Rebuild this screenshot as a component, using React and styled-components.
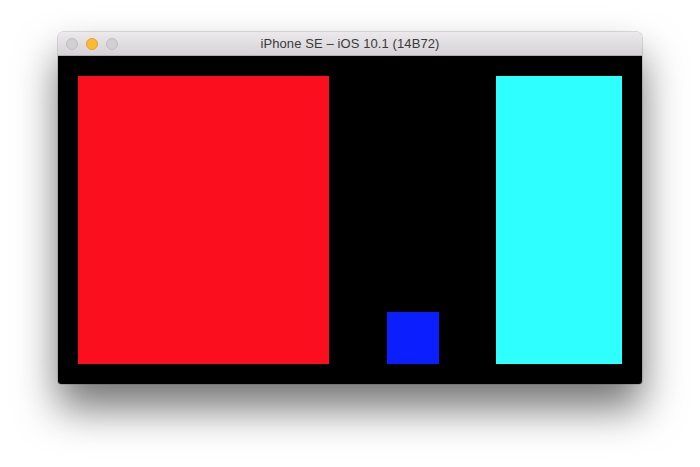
import React from 'react';
import styled, { createGlobalStyle } from 'styled-components';

const GlobalStyle = createGlobalStyle`
  html, body {
    margin: 0;
    padding: 0;
    background: #ffffff;
  }
  body {
    font-family: 'Liberation Sans', 'Helvetica Neue', Arial, sans-serif;
  }
`;

const Stage = styled.div`
  width: 700px;
  height: 467px;
  padding: 32px 0 0 58px;
  box-sizing: border-box;
  overflow: hidden;
`;

const Window = styled.div`
  width: 584px;
  border-radius: 5px 5px 3px 3px;
  overflow: hidden;
  box-shadow: 0 24px 42px rgba(0, 0, 0, 0.55), 0 0 0 0.5px rgba(0, 0, 0, 0.25);
`;

const TitleBar = styled.div`
  position: relative;
  height: 23px;
  display: flex;
  align-items: center;
  justify-content: center;
  background: linear-gradient(#ebe9eb, #d5d3d5);
  border-bottom: 1px solid #b1afb1;
`;

const Lights = styled.div`
  position: absolute;
  left: 8px;
  top: 6px;
  display: flex;
  gap: 8px;
`;

const Light = styled.span`
  width: 12px;
  height: 12px;
  border-radius: 50%;
  box-sizing: border-box;
  background: ${({ color }) => color};
  border: 1px solid ${({ edge }) => edge};
`;

const Title = styled.span`
  font-size: 13px;
  color: #3a3a3a;
  letter-spacing: 0.1px;
`;

const Screen = styled.div`
  height: 288px;
  background: #000;
  padding: 20px;
  display: flex;
  justify-content: space-between;
  align-items: flex-end;
`;

const Block = styled.div`
  width: ${({ w }) => w}px;
  height: ${({ h }) => h}px;
  background: ${({ color }) => color};
`;

export default function App() {
  return (
    <>
      <GlobalStyle />
      <Stage>
        <Window>
          <TitleBar>
            <Lights>
              <Light color="#d2d0d2" edge="#bfbdbf" />
              <Light color="#fdbc30" edge="#e0a228" />
              <Light color="#d2d0d2" edge="#bfbdbf" />
            </Lights>
            <Title>iPhone SE – iOS 10.1 (14B72)</Title>
          </TitleBar>
          <Screen>
            <Block w={251} h={288} color="#fb0e1e" />
            <Block w={52} h={52} color="#0a1efe" />
            <Block w={126} h={288} color="#2effff" />
          </Screen>
        </Window>
      </Stage>
    </>
  );
}
